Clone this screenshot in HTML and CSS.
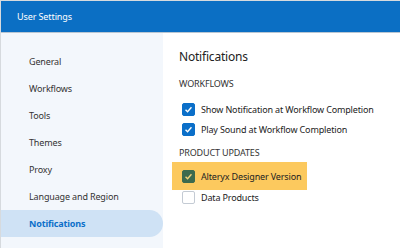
FILE: index.html
```html
<!DOCTYPE html>
<html lang="en">
<head>
    <meta charset="UTF-8">
    <title>User Settings</title>
    <link rel="stylesheet" href="styles.css">
</head>
<body>
    <div class="window">
        <div class="header">User Settings</div>
        <div class="body">
            <div class="sidebar">
                <div class="nav-item">General</div>
                <div class="nav-item">Workflows</div>
                <div class="nav-item">Tools</div>
                <div class="nav-item">Themes</div>
                <div class="nav-item">Proxy</div>
                <div class="nav-item">Language and Region</div>
                <div class="nav-item active">Notifications</div>
            </div>
            <div class="content">
                <h1>Notifications</h1>
                <div class="section">Workflows</div>
                <div class="option">
                    <span class="check checked"><svg viewBox="0 0 13 13"><path d="M3 6.8 5.4 9.2 10 3.8" /></svg></span>
                    Show Notification at Workflow Completion
                </div>
                <div class="option">
                    <span class="check checked"><svg viewBox="0 0 13 13"><path d="M3 6.8 5.4 9.2 10 3.8" /></svg></span>
                    Play Sound at Workflow Completion
                </div>
                <div class="section second">Product Updates</div>
                <div class="option marked">
                    <span class="check checked green"><svg viewBox="0 0 13 13"><path d="M3 6.8 5.4 9.2 10 3.8" /></svg></span>
                    Alteryx Designer Version
                </div>
                <div class="option compact">
                    <span class="check"></span>
                    Data Products
                </div>
            </div>
        </div>
    </div>
</body>
</html>
```

FILE: styles.css
```css
body {
    margin: 0;
    font-family: "Noto Sans", "Open Sans", sans-serif;
    color: #222;
}

.window {
    width: 399px;
    height: 247px;
    border-top: 1px solid #d6dade;
    border-left: 1px solid #d6dade;
    display: flex;
    flex-direction: column;
    overflow: hidden;
}

.header {
    height: 31px;
    background: #0b6fc4;
    color: #fff;
    font-size: 9px;
    letter-spacing: -0.1px;
    line-height: 31px;
    padding-left: 16px;
    border-bottom: 1px solid #b9c6d2;
}

.body {
    flex: 1;
    display: flex;
}

.sidebar {
    width: 162px;
    background: #f3f7fc;
    padding-top: 15px;
}

.nav-item {
    height: 27px;
    line-height: 27px;
    padding-left: 28px;
    font-size: 9px;
    letter-spacing: -0.15px;
    color: #333;
}

.nav-item.active {
    background: #cfe2f5;
    color: #0b6fc9;
    font-weight: bold;
    border-radius: 0 14px 14px 0;
}

.content {
    flex: 1;
    background: #fff;
    padding: 15px 0 0 16px;
    display: flex;
    flex-direction: column;
    align-items: flex-start;
}

h1 {
    margin: 0;
    font-size: 12px;
    letter-spacing: -0.2px;
    font-weight: normal;
    line-height: 18px;
    color: #222;
}

.section {
    margin-top: 9px;
    font-size: 9px;
    letter-spacing: -0.15px;
    text-transform: uppercase;
    line-height: 18px;
    color: #333;
}

.section.second {
    margin-top: 5px;
}

.option {
    display: flex;
    align-items: center;
    height: 20px;
    font-size: 9px;
    letter-spacing: -0.15px;
    color: #222;
    margin-left: -7px;
    padding-left: 10px;
    white-space: nowrap;
}

.section + .option {
    margin-top: 6px;
}

.option.marked {
    background: #fcc95e;
    height: 28px;
    width: 125px;
    margin-top: 0;
}

.option.compact {
    height: 14px;
}

.check {
    width: 11px;
    height: 11px;
    border: 1px solid #c4cbd4;
    border-radius: 2px;
    background: #fff;
    margin-right: 6px;
    flex-shrink: 0;
    display: flex;
}

.check.checked {
    background: #0b6fc9;
    border-color: #0b6fc9;
}

.check.green {
    background: #3d6a4e;
    border-color: #3d6a4e;
}

.check svg {
    width: 11px;
    height: 11px;
    fill: none;
    stroke: #fff;
    stroke-width: 1.6;
}

.check.green svg {
    stroke: #f3d27a;
}
```
